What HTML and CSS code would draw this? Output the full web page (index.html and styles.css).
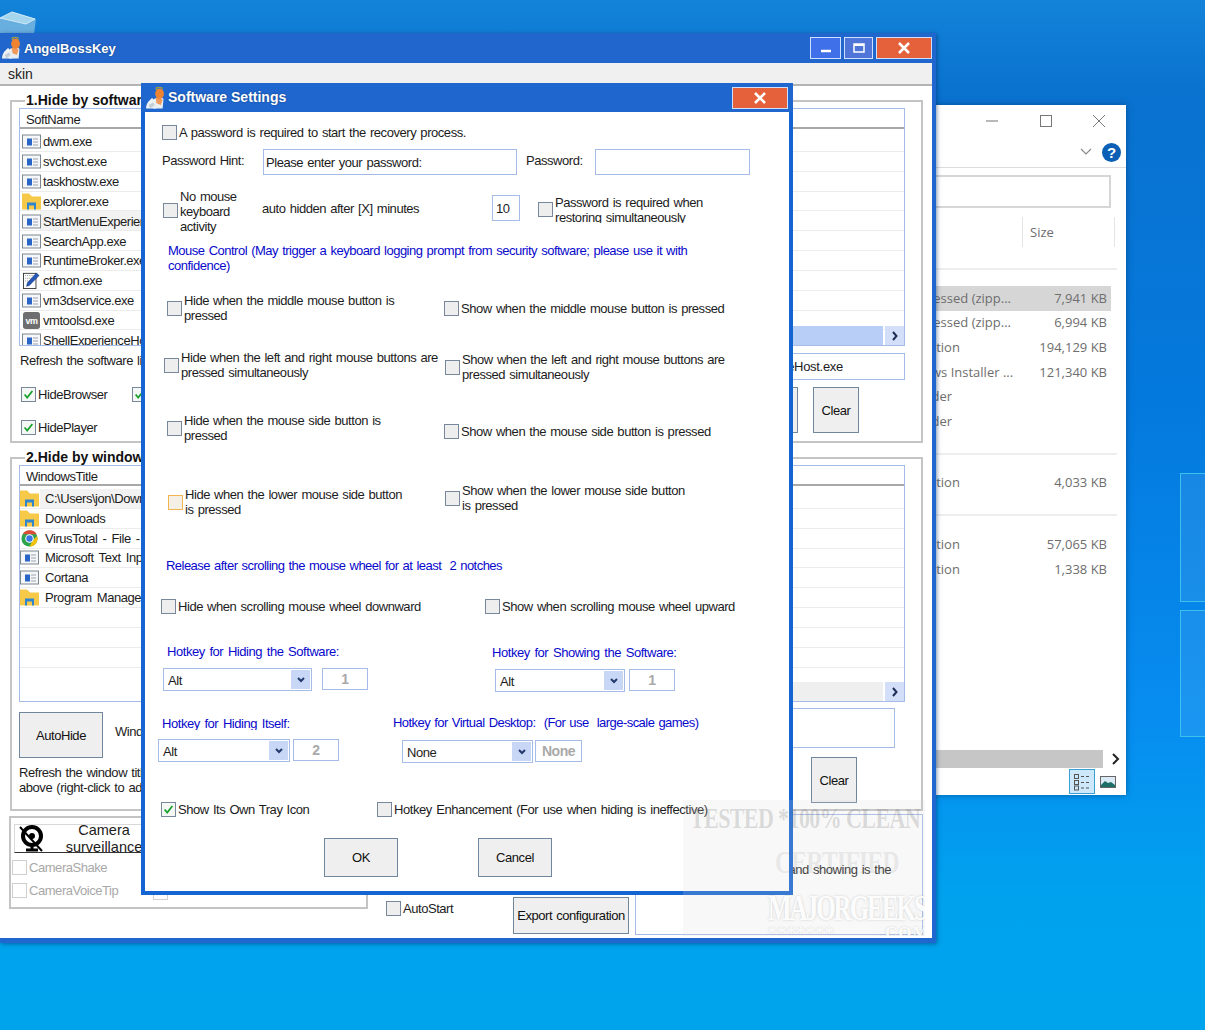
FILE: index.html
```html
<!DOCTYPE html>
<html lang="en">
  <head>
    <meta charset="UTF-8" />
    <title>AngelBossKey</title>
    <link rel="stylesheet" href="styles.css">
  </head>
  <body>
    <svg class="sprite" aria-hidden="true">
      <symbol id="ico-angel" viewBox="0 0 24 26">
        <ellipse cx="15" cy="2.2" rx="3.6" ry="1.4" fill="none" stroke="#a3a53a" stroke-width="1.2"/>
        <path d="M0 25c0-5 3-9 7-12l4 4 1 8z" fill="#eef2f5"/>
        <path d="M9 14l7-3 4 3-1 11H8z" fill="#e9eef2"/>
        <path d="M11 13l5-1 3 3-2 6-5-2z" fill="#f0995a"/>
        <ellipse cx="15.5" cy="8" rx="5" ry="5.8" fill="#ee8432"/>
        <path d="M3 21l5-3 2 3-5 4z" fill="#c3ced7"/>
      </symbol>
      <symbol id="ico-app" viewBox="0 0 19 14">
        <rect x=".5" y=".5" width="18" height="13" fill="#f4f6f8" stroke="#7d8790"/>
        <rect x="5" y="4" width="5" height="7" fill="#2a66c8"/>
        <path d="M11 4.5h5M11 7.5h5M11 10.5h5" stroke="#9aa4ae"/>
      </symbol>
      <symbol id="ico-folder" viewBox="0 0 19 16">
        <path d="M0 0h7l3 3h9v13H0z" fill="#f7c948"/>
        <path d="M5 16V9h9v7h-2v-4H7v4z" fill="#2f86cf"/>
      </symbol>
      <symbol id="ico-chrome" viewBox="0 0 20 20">
        <circle cx="10" cy="10" r="9.5" fill="#2ea44f"/>
        <path d="M2 5a9.5 9.5 0 0 1 16.5 0H10z" fill="#dd4b39"/>
        <path d="M19 7a9.5 9.5 0 0 1-9 12.5L14 12z" fill="#f4c20d"/>
        <circle cx="10" cy="10" r="5" fill="#fff"/>
        <circle cx="10" cy="10" r="3.8" fill="#3b78e7"/>
      </symbol>
      <symbol id="ico-vm" viewBox="0 0 19 19">
        <rect width="19" height="19" rx="3" fill="#6e6e70"/>
        <text x="9.5" y="13" text-anchor="middle" font-family="Liberation Sans" font-size="10" font-weight="700" fill="#fff">vm</text>
      </symbol>
      <symbol id="ico-pen" viewBox="0 0 19 19">
        <rect x=".5" y="1.5" width="14" height="17" fill="#fff" stroke="#333"/>
        <path d="M2.5 4h10M2.5 7h8M2.5 10h6" stroke="#888" stroke-dasharray="1 1"/>
        <path d="M4 16l1-4L15 1l3 3L7 15z" fill="#2457b8" stroke="#0d2d6d" stroke-width=".6"/>
      </symbol>
      <symbol id="ico-tick" viewBox="0 0 15 15">
        <path d="M3 7.5l3 3.5 6-7.5" fill="none" stroke="#16a02c" stroke-width="2"/>
      </symbol>
      <symbol id="ico-chev" viewBox="0 0 10 8">
        <path d="M2 2l3 3 3-3" fill="none" stroke="#22396b" stroke-width="2"/>
      </symbol>
      <symbol id="ico-right" viewBox="0 0 8 10">
        <path d="M2 1l3.5 4L2 9" fill="none" stroke="#1d2d55" stroke-width="2"/>
      </symbol>
    </svg>

    <svg class="recycle" viewBox="0 0 36 24">
      <path d="M0 8L12 2l24 7-2 15H0z" fill="#68aede"/>
      <path d="M0 8L12 2l23 7-9 5z" fill="#a6d5ee"/>
      <path d="M0 8l26 6 9-5M0 8L12 2l23 7" fill="none" stroke="#cfe9f6" stroke-width="1"/>
    </svg>
    <div class="logo-pane logo-top"></div>
    <div class="logo-pane logo-bottom"></div>

    <section class="explorer">
      <div class="ex-caption">
        <span class="ex-btn"><svg width="14" height="14"><path d="M1 7h12" stroke="#888" stroke-width="1.2"/></svg></span>
        <span class="ex-btn"><svg width="14" height="14"><rect x="1.5" y="1.5" width="11" height="11" fill="none" stroke="#777"/></svg></span>
        <span class="ex-btn"><svg width="14" height="14"><path d="M1 1l12 12M13 1L1 13" stroke="#777"/></svg></span>
      </div>
      <div class="ex-ribbon">
        <svg width="14" height="10"><path d="M2 2l5 5 5-5" fill="none" stroke="#8a8a8a" stroke-width="1.2"/></svg>
        <span class="ex-help">?</span>
      </div>
      <div class="ex-search"></div>
      <div class="ex-header"><span>Size</span></div>
      <div class="ex-line ex-line-first"></div>
      <div class="ex-row ex-selected"><span>Compressed (zipp...</span><span>7,941 KB</span></div>
      <div class="ex-row"><span>Compressed (zipp...</span><span>6,994 KB</span></div>
      <div class="ex-row"><span>Application</span><span>194,129 KB</span></div>
      <div class="ex-row"><span>Windows Installer ...</span><span>121,340 KB</span></div>
      <div class="ex-row"><span>File folder</span></div>
      <div class="ex-row"><span>File folder</span></div>
      <div class="ex-line ex-line-mid"></div>
      <div class="ex-row ex-after"><span>Application</span><span>4,033 KB</span></div>
      <div class="ex-line ex-line-mid"></div>
      <div class="ex-row ex-after"><span>Application</span><span>57,065 KB</span></div>
      <div class="ex-row"><span>Application</span><span>1,338 KB</span></div>
      <div class="ex-scroll">
        <div class="ex-thumb"></div>
        <svg width="21" height="18"><path d="M8 4l5 5-5 5" fill="none" stroke="#222" stroke-width="2"/></svg>
      </div>
      <div class="ex-status">
        <span class="ex-view ex-view-on">
          <svg width="18" height="18"><g fill="none" stroke="#555"><rect x="1.5" y="1.5" width="4" height="4"/><rect x="1.5" y="7.5" width="4" height="4"/><rect x="1.5" y="13" width="4" height="4"/><path d="M8 3.5h3M13 3.5h3M8 9.5h3M13 9.5h3M8 15h3M13 15h3"/></g></svg>
        </span>
        <span class="ex-view">
          <svg width="16" height="12"><rect x=".5" y=".5" width="15" height="11" fill="#dbeaf5" stroke="#666"/><path d="M1 9l4-4 3 2 3-1 4 3v2H1z" fill="#1f6f66"/></svg>
        </span>
      </div>
    </section>

    <section class="main-win">
      <header class="titlebar">
        <svg class="title-icon"><use href="#ico-angel"/></svg>
        <span class="title-text">AngelBossKey</span>
        <span class="cap-btn cap-min"><svg width="14" height="10"><path d="M2 8h10" stroke="#fff" stroke-width="2.5"/></svg></span>
        <span class="cap-btn cap-max"><svg width="14" height="12"><rect x="2" y="2" width="10" height="8" fill="none" stroke="#fff" stroke-width="1.5"/><path d="M2 3h10" stroke="#fff" stroke-width="2"/></svg></span>
        <span class="cap-btn cap-close"><svg width="14" height="12"><path d="M2 1l10 10M12 1L2 11" stroke="#fff" stroke-width="2.6"/></svg></span>
      </header>
      <nav class="menubar">skin</nav>

      <fieldset class="group group-soft">
        <legend>1.Hide by software</legend>
        <div class="list list-soft">
          <div class="list-head">SoftName</div>
          <div class="list-row"><svg class="ico"><use href="#ico-app"/></svg>dwm.exe</div>
          <div class="list-row"><svg class="ico"><use href="#ico-app"/></svg>svchost.exe</div>
          <div class="list-row"><svg class="ico"><use href="#ico-app"/></svg>taskhostw.exe</div>
          <div class="list-row"><svg class="ico"><use href="#ico-folder"/></svg>explorer.exe</div>
          <div class="list-row list-hot"><svg class="ico"><use href="#ico-app"/></svg>StartMenuExperienceHost.exe</div>
          <div class="list-row"><svg class="ico"><use href="#ico-app"/></svg>SearchApp.exe</div>
          <div class="list-row"><svg class="ico"><use href="#ico-app"/></svg>RuntimeBroker.exe</div>
          <div class="list-row"><svg class="ico"><use href="#ico-pen"/></svg>ctfmon.exe</div>
          <div class="list-row"><svg class="ico"><use href="#ico-app"/></svg>vm3dservice.exe</div>
          <div class="list-row"><svg class="ico"><use href="#ico-vm"/></svg>vmtoolsd.exe</div>
          <div class="list-row"><svg class="ico"><use href="#ico-app"/></svg>ShellExperienceHost.exe</div>
          <div class="list-scroll list-scroll-blue">
            <div class="scroll-track"></div>
            <span class="scroll-arrow"><svg width="8" height="10"><use href="#ico-right"/></svg></span>
          </div>
        </div>
        <div class="soft-below">
          <div class="soft-left">
            <p class="refresh-soft">Refresh the software list</p>
            <div class="hide-row hide-row-first">
              <span class="opt"><span class="chk chk-on"><svg><use href="#ico-tick"/></svg></span><span class="tight">HideBrowser</span></span>
              <span class="chk chk-on second-chk"><svg><use href="#ico-tick"/></svg></span>
            </div>
            <div class="hide-row hide-row-next">
              <span class="opt"><span class="chk chk-on"><svg><use href="#ico-tick"/></svg></span><span class="tight">HidePlayer</span></span>
            </div>
          </div>
          <div class="soft-right">
            <div class="textbox soft-input">ShellExperienceHost.exe</div>
            <div class="soft-btns">
              <button class="btn btn-hidden">Add</button>
              <button class="btn btn-clear">Clear</button>
            </div>
          </div>
        </div>
      </fieldset>

      <fieldset class="group group-win">
        <legend>2.Hide by windows title</legend>
        <div class="list list-win">
          <div class="list-head">WindowsTitle</div>
          <div class="list-row list-hot"><svg class="ico"><use href="#ico-folder"/></svg>C:\Users\jon\Downloads</div>
          <div class="list-row"><svg class="ico"><use href="#ico-folder"/></svg>Downloads</div>
          <div class="list-row"><svg class="ico"><use href="#ico-chrome"/></svg>VirusTotal - File - Analysis</div>
          <div class="list-row"><svg class="ico"><use href="#ico-app"/></svg>Microsoft Text Input Application</div>
          <div class="list-row"><svg class="ico"><use href="#ico-app"/></svg>Cortana</div>
          <div class="list-row"><svg class="ico"><use href="#ico-folder"/></svg>Program Manager</div>
          <div class="list-row"></div>
          <div class="list-row"></div>
          <div class="list-row"></div>
          <div class="list-scroll list-scroll-gray">
            <div class="scroll-track"></div>
            <span class="scroll-arrow"><svg width="8" height="10"><use href="#ico-right"/></svg></span>
          </div>
        </div>
        <div class="win-below">
          <div class="win-left">
            <div class="autohide-row">
              <button class="btn btn-autohide">AutoHide</button>
              <span class="wind-label">Windows title</span>
            </div>
            <p class="refresh-win">Refresh the window titles in the list<br>above (right-click to add a title)</p>
          </div>
          <div class="win-right">
            <div class="textbox win-input"></div>
            <button class="btn btn-clear win-clear">Clear</button>
          </div>
        </div>
      </fieldset>

      <div class="bottom-row">
        <div class="camera-group">
          <div class="camera-btn">
            <svg class="camera-ico" width="26" height="28" viewBox="0 0 26 28">
              <circle cx="14" cy="11" r="9" fill="none" stroke="#000" stroke-width="4"/>
              <circle cx="14" cy="11" r="3" fill="#000"/>
              <path d="M8 25h12M14 20v5" stroke="#000" stroke-width="3"/>
              <path d="M2 2l22 24" stroke="#000" stroke-width="2"/>
            </svg>
            <span class="camera-text">Camera<br>surveillance</span>
          </div>
          <div class="opt opt-off opt-shake"><span class="chk chk-off"></span><span class="tight">CameraShake</span></div>
          <div class="opt opt-off opt-voice"><span class="chk chk-off"></span><span class="tight">CameraVoiceTip</span></div>
          <span class="chk chk-off voice-extra"></span>
        </div>
        <div class="opt auto-start"><span class="chk"></span><span class="tight">AutoStart</span></div>
        <button class="btn btn-export">Export configuration</button>
        <div class="textbox notes-box">Note that hiding and showing is the</div>
      </div>
    </section>

    <section class="dialog">
      <header class="dialog-title">
        <svg class="title-icon"><use href="#ico-angel"/></svg>
        <span class="title-text">Software Settings</span>
        <span class="cap-btn cap-close"><svg width="14" height="12"><path d="M2 1l10 10M12 1L2 11" stroke="#fff" stroke-width="2.6"/></svg></span>
      </header>

      <div class="opt row-pw-check"><span class="chk"></span><span>A password is required to start the recovery process.</span></div>

      <div class="row-hint">
        <span class="hint-label">Password Hint:</span>
        <div class="textbox hint-input">Please enter your password:</div>
        <span class="pw-label">Password:</span>
        <div class="textbox pw-input"></div>
      </div>

      <div class="row-idle">
        <span class="chk idle-chk"></span>
        <span class="idle-label">No mouse<br>keyboard<br>activity</span>
        <span class="idle-after">auto hidden after [X] minutes</span>
        <div class="textbox idle-input">10</div>
        <span class="chk idle-pw-chk"></span>
        <span class="idle-pw-label">Password is required when<br>restoring simultaneously</span>
      </div>

      <p class="blue note-mouse">Mouse Control (May trigger a keyboard logging prompt from security software; please use it with<br>confidence)</p>

      <div class="opt-row row-middle">
        <div class="opt"><span class="chk"></span><span>Hide when the middle mouse button is<br>pressed</span></div>
        <div class="opt"><span class="chk"></span><span>Show when the middle mouse button is pressed</span></div>
      </div>
      <div class="opt-row row-both">
        <div class="opt"><span class="chk"></span><span>Hide when the left and right mouse buttons are<br>pressed simultaneously</span></div>
        <div class="opt"><span class="chk"></span><span>Show when the left and right mouse buttons are<br>pressed simultaneously</span></div>
      </div>
      <div class="opt-row row-side">
        <div class="opt"><span class="chk"></span><span>Hide when the mouse side button is<br>pressed</span></div>
        <div class="opt"><span class="chk"></span><span>Show when the mouse side button is pressed</span></div>
      </div>
      <div class="opt-row row-lower">
        <div class="opt"><span class="chk chk-focus"></span><span>Hide when the lower mouse side button<br>is pressed</span></div>
        <div class="opt"><span class="chk"></span><span>Show when the lower mouse side button<br>is pressed</span></div>
      </div>

      <p class="blue note-wheel">Release after scrolling the mouse wheel for at least&nbsp; 2 notches</p>

      <div class="opt-row row-wheel">
        <div class="opt"><span class="chk"></span><span>Hide when scrolling mouse wheel downward</span></div>
        <div class="opt"><span class="chk"></span><span>Show when scrolling mouse wheel upward</span></div>
      </div>

      <div class="row-keys-label">
        <span class="blue key-hide-label">Hotkey for Hiding the Software:</span>
        <span class="blue key-show-label">Hotkey for Showing the Software:</span>
      </div>
      <div class="row-keys">
        <div class="combo combo-hide">Alt<span class="combo-arrow"><svg width="10" height="8"><use href="#ico-chev"/></svg></span></div>
        <div class="keybox key-hide-box">1</div>
        <div class="combo combo-show">Alt<span class="combo-arrow"><svg width="10" height="8"><use href="#ico-chev"/></svg></span></div>
        <div class="keybox key-show-box">1</div>
      </div>

      <div class="row-keys-label row-self-label">
        <span class="blue key-self-label">Hotkey for Hiding Itself:</span>
        <span class="blue key-virt-label">Hotkey for Virtual Desktop:&nbsp; (For use&nbsp; large-scale games)</span>
      </div>
      <div class="row-keys row-keys-self">
        <div class="combo combo-self">Alt<span class="combo-arrow"><svg width="10" height="8"><use href="#ico-chev"/></svg></span></div>
        <div class="keybox key-self-box">2</div>
        <div class="combo combo-virt">None<span class="combo-arrow"><svg width="10" height="8"><use href="#ico-chev"/></svg></span></div>
        <div class="keybox key-virt-box">None</div>
      </div>

      <div class="row-tray">
        <div class="opt tray-own"><span class="chk chk-on"><svg><use href="#ico-tick"/></svg></span><span>Show Its Own Tray Icon</span></div>
        <div class="opt tray-enh"><span class="chk"></span><span>Hotkey Enhancement (For use when hiding is ineffective)</span></div>
      </div>

      <div class="row-actions">
        <button class="btn btn-action">OK</button>
        <button class="btn btn-action">Cancel</button>
      </div>
    </section>

    <aside class="stamp">
      <div class="stamp-top">TESTED *100% CLEAN</div>
      <div class="stamp-mid">CERTIFIED</div>
      <div class="stamp-name">MAJORGEEKS</div>
      <div class="stamp-foot">******* .COM</div>
    </aside>
  </body>
</html>
```

FILE: styles.css
```css
* {
  box-sizing: border-box;
}
html,
body {
  height: 1030px;
}
body {
  margin: 0;
  position: relative;
  overflow: hidden;
  font-family: "Liberation Sans", Arial, sans-serif;
  font-size: 13px;
  letter-spacing: -0.45px;
  word-spacing: 1px;
  line-height: 15px;
  color: #1c1c1c;
  background: linear-gradient(180deg, #1383d9 0, #0a72cf 90px, #0479dd 400px, #078df0 720px, #00a2ee 900px, #00a4ec 1030px);
}
p {
  margin: 0;
}
.sprite {
  position: absolute;
  width: 0;
  height: 0;
}

/* desktop */
.recycle {
  position: absolute;
  left: 0;
  top: 10px;
  width: 36px;
  height: 24px;
}
.logo-pane {
  position: absolute;
  left: 1180px;
  width: 40px;
  background: rgba(255, 255, 255, 0.08);
  border: 1px solid #3dc0ee;
}
.logo-top {
  top: 473px;
  height: 129px;
}
.logo-bottom {
  top: 610px;
  height: 127px;
}

/* explorer behind */
.explorer {
  position: absolute;
  left: 700px;
  top: 105px;
  width: 426px;
  height: 690px;
  background: #fff;
  display: flex;
  flex-direction: column;
  box-shadow: 0 0 6px rgba(0, 40, 90, 0.5);
  font-family: "Open Sans", sans-serif;
  font-size: 13px;
  letter-spacing: 0;
  word-spacing: 0;
  color: #6e6e6e;
}
.ex-caption {
  display: flex;
  justify-content: flex-end;
  height: 32px;
}
.ex-btn {
  width: 53.5px;
  display: flex;
  align-items: center;
  justify-content: center;
}
.ex-ribbon {
  height: 31px;
  display: flex;
  justify-content: flex-end;
  align-items: center;
  gap: 9px;
  padding-right: 5px;
  border-bottom: 1px solid #dcdcdc;
}
.ex-help {
  width: 19px;
  height: 19px;
  border-radius: 50%;
  background: #0b5fb5;
  color: #fff;
  font: bold 15px/19px "Liberation Sans", sans-serif;
  text-align: center;
}
.ex-search {
  margin: 7px 15px 0 0;
  height: 33px;
  border: 2px solid #d6d6d6;
  border-left: none;
}
.ex-header {
  display: flex;
  justify-content: flex-end;
  margin: 9px 11px 0 0;
}
.ex-header span {
  width: 93px;
  height: 30px;
  padding-left: 7px;
  line-height: 30px;
  border-left: 1px solid #e5e5e5;
  border-right: 1px solid #e5e5e5;
}
.ex-line {
  height: 2px;
  background: #eeeeee;
  margin-right: 9px;
}
.ex-line-first {
  margin-top: 21px;
  margin-bottom: 16px;
}
.ex-line-mid {
  margin-top: 19px;
}
.ex-row {
  height: 24.6px;
  display: flex;
  justify-content: space-between;
  align-items: center;
  padding: 0 4px 0 192px;
  margin-right: 15px;
}
.ex-selected {
  background: #d6d6d6;
}
.ex-after {
  margin-top: 16px;
}
.ex-scroll {
  margin-top: auto;
  height: 18px;
  display: flex;
}
.ex-thumb {
  flex: 1;
  background: #c6c6c6;
  margin-right: 2px;
}
.ex-status {
  height: 27px;
  display: flex;
  justify-content: flex-end;
  align-items: center;
  padding-right: 10px;
  gap: 4px;
}
.ex-view {
  width: 17px;
  height: 25px;
  display: flex;
  align-items: center;
  justify-content: center;
}
.ex-view-on {
  width: 26px;
  background: #cde8fb;
  border: 1px solid #3b9fd6;
}

/* main window */
.main-win {
  position: absolute;
  left: 0;
  top: 33px;
  width: 936px;
  height: 910px;
  background: #fff;
  border-right: 4px solid #1f66cf;
  border-bottom: 5px solid #1f66cf;
  box-shadow: 1px 1px 4px rgba(0, 40, 90, 0.5);
}
.titlebar {
  height: 30px;
  background: #2166cd;
  display: flex;
  align-items: center;
  padding-left: 2px;
}
.title-icon {
  width: 21px;
  height: 24px;
  flex: none;
}
.title-text {
  flex: 1;
  margin-left: 1px;
  color: #fff;
  font-size: 13px;
  font-weight: bold;
  letter-spacing: 0;
  word-spacing: 0;
  text-shadow: 0 0 2px rgba(0, 0, 0, 0.4);
}
.cap-btn {
  height: 22px;
  display: flex;
  align-items: center;
  justify-content: center;
  border: 1px solid #cfe0ff;
}
.cap-min {
  width: 31px;
  background: #3f70ea;
}
.cap-max {
  width: 29px;
  margin-left: 3px;
  background: #4f75d9;
}
.cap-close {
  width: 56px;
  margin-left: 3px;
  background: #e5613b;
}
.menubar {
  height: 23px;
  padding: 4px 8px;
  background: #f0f0f0;
  border-bottom: 2px solid #b4b4b4;
  font-size: 14px;
  letter-spacing: 0;
}
.group {
  margin: 7px 0 0 10px;
  padding: 0 16px 0 7px;
  width: 913px;
  border: 2px solid #c4c4c4;
  min-inline-size: 0;
}
.group legend {
  margin-left: 6px;
  padding: 0 1px;
  height: 15px;
  font-size: 14px;
  font-weight: bold;
  letter-spacing: 0;
  word-spacing: 0;
  color: #111;
}
.group-soft {
  height: 350px;
}
.group-win {
  height: 361px;
}
.list {
  position: relative;
  width: 886px;
  border: 1px solid #a5bbe8;
  overflow: hidden;
}
.list-soft {
  height: 238px;
}
.list-win {
  height: 237px;
}
.list-head {
  height: 20px;
  padding: 3px 6px 0;
  border-bottom: 2px solid #a8a8a8;
  margin-bottom: 3px;
}
.list-row {
  height: 19.85px;
  display: flex;
  align-items: center;
  padding-left: 2px;
  padding-top: 1px;
  border-bottom: 1px solid #ececec;
  white-space: nowrap;
}
.list-hot {
  background: linear-gradient(90deg, #fff 20px, #f2f2f2 20px, #f2f2f2 300px, #fff 300px);
}
.list-win .list-row {
  padding-top: 0;
  word-spacing: 2px;
}
.ico {
  width: 19px;
  height: 17px;
  margin-right: 2px;
  flex: none;
}
.list-win .ico {
  margin: 0 6px 0 -2px;
}
.list-scroll {
  position: absolute;
  left: 122px;
  right: 0;
  bottom: 0;
  height: 19px;
  display: flex;
}
.scroll-track {
  flex: 1;
  margin-right: 2px;
}
.list-scroll-blue .scroll-track {
  background: #b9cef6;
}
.list-scroll-gray .scroll-track {
  background: #efefef;
}
.scroll-arrow {
  width: 19px;
  display: flex;
  align-items: center;
  justify-content: center;
  background: #d3dff8;
}
.soft-below,
.win-below {
  display: flex;
  justify-content: space-between;
}
.soft-left {
  padding-left: 2px;
}
.refresh-soft {
  margin: 7px 0 0 -1px;
}
.hide-row {
  display: flex;
}
.hide-row-first {
  margin-top: 19px;
}
.hide-row-next {
  margin-top: 18px;
}
.second-chk {
  margin-left: 25px;
}
.soft-right {
  width: 265px;
}
.textbox {
  border: 1px solid #a5bbe8;
  background: #fff;
  padding: 4px 2px;
  white-space: nowrap;
  overflow: hidden;
}
.soft-input {
  height: 27px;
  margin-top: 7px;
  padding: 5px 61px 0 0;
  text-align: right;
  letter-spacing: -0.3px;
}
.soft-btns {
  display: flex;
  justify-content: flex-end;
  margin: 7px 46px 0 0;
  gap: 15px;
}
.btn {
  font: inherit;
  letter-spacing: inherit;
  word-spacing: inherit;
  white-space: nowrap;
  color: #111;
  background: #efefef;
  border: 1px solid #70869c;
  padding: 0;
}
.btn-hidden {
  width: 78px;
  height: 46px;
}
.btn-clear {
  width: 46px;
  height: 46px;
}
.autohide-row {
  display: flex;
  margin-top: 10px;
}
.btn-autohide {
  width: 84px;
  height: 46px;
}
.wind-label {
  margin: 12px 0 0 12px;
}
.refresh-win {
  margin-top: 7px;
}
.win-right {
  width: 255px;
  margin-right: 10px;
  display: flex;
  flex-direction: column;
  align-items: flex-end;
}
.win-input {
  width: 255px;
  height: 40px;
  margin-top: 6px;
}
.win-clear {
  margin: 9px 38px 0 0;
}
.bottom-row {
  display: flex;
  margin-top: 3px;
}
.camera-group {
  position: relative;
  width: 359px;
  height: 93px;
  margin: 2px 0 0 9px;
  padding: 6px 0 0 3px;
  border: 2px solid #c4c4c4;
}
.camera-btn {
  width: 150px;
  height: 29px;
  display: flex;
  border-top: 1px solid #d8d8d8;
  border-left: 1px solid #d8d8d8;
  border-bottom: 1px solid #333;
  overflow: hidden;
}
.camera-ico {
  flex: none;
  margin: 0 0 0 3px;
}
.camera-text {
  width: 92px;
  margin: -3px 0 0 14px;
  text-align: center;
  font-size: 14.5px;
  line-height: 17px;
  letter-spacing: 0;
}
.opt {
  display: flex;
  align-items: center;
  gap: 2px;
  white-space: nowrap;
}
.opt-off {
  color: #a8a8a8;
  margin-left: -2px;
}
.opt-shake {
  margin-top: 7px;
}
.opt-voice {
  margin-top: 8px;
}
.voice-extra {
  position: absolute;
  left: 142px;
  top: 67px;
}
.tight {
  word-spacing: 0;
}
.chk {
  width: 15px;
  height: 15px;
  flex: none;
  display: block;
  background: #eeeeee;
  border: 1px solid #78889a;
}
.chk svg {
  display: block;
  width: 13px;
  height: 13px;
}
.chk-on {
  background: #f4f7f4;
}
.chk-off {
  background: #fff;
  border-color: #cfcfcf;
}
.chk-focus {
  background: #f4f0e6;
  border-color: #f2b551;
}
.auto-start {
  width: 127px;
  height: 15px;
  margin: 87px 0 0 18px;
  flex: none;
}
.btn-export {
  width: 116px;
  height: 37px;
  margin-top: 83px;
  flex: none;
}
.notes-box {
  width: 288px;
  height: 121px;
  margin-left: 6px;
  padding: 47px 31px 0 0;
  text-align: right;
}

/* settings dialog */
.dialog {
  position: absolute;
  left: 141px;
  top: 83px;
  width: 652px;
  height: 812px;
  background: #fff;
  border: 4px solid #1464d2;
  border-top: none;
}
.dialog-title {
  height: 29px;
  background: #1f66cf;
  margin: 0 -4px;
  display: flex;
  align-items: center;
  padding: 0 5px;
}
.dialog-title .title-text {
  font-size: 14px;
}
.dialog-title .cap-close {
  margin-top: 1px;
}
.blue {
  color: #0808cc;
}
.row-pw-check {
  margin: 12px 0 0 17px;
  height: 16px;
}
.row-hint {
  display: flex;
  align-items: center;
  margin: 9px 0 0 17px;
  height: 26px;
}
.hint-label {
  width: 101px;
  margin-top: -3px;
}
.hint-input {
  width: 254px;
  height: 26px;
  padding-top: 5px;
}
.pw-label {
  width: 69px;
  margin: -3px 0 0 9px;
}
.pw-input {
  width: 155px;
  height: 26px;
}
.row-idle {
  display: flex;
  align-items: flex-start;
  margin: 14px 0 0 18px;
  height: 46px;
}
.idle-chk {
  margin-top: 14px;
}
.idle-label {
  width: 82px;
  margin-left: 2px;
}
.idle-after {
  width: 230px;
  margin-top: 12px;
}
.idle-input {
  width: 28px;
  height: 26px;
  margin-top: 6px;
  padding-top: 5px;
  padding-left: 3px;
}
.idle-pw-chk {
  margin: 13px 0 0 18px;
}
.idle-pw-label {
  height: 28px;
  margin: 6px 0 0 2px;
  overflow: hidden;
}
.note-mouse {
  margin: 8px 0 0 23px;
  letter-spacing: -0.5px;
}
.opt-row {
  display: grid;
  grid-template-columns: 297px 1fr;
  align-items: start;
}
.row-middle {
  margin-top: 20px;
}
.row-middle .opt:first-child {
  margin-left: 22px;
}
.row-middle .opt:last-child {
  margin: 8px 0 0 2px;
}
.row-both {
  margin-top: 27px;
}
.row-both .opt:first-child {
  margin-left: 19px;
}
.row-both .opt:last-child {
  margin: 2px 0 0 3px;
}
.row-side {
  margin-top: 31px;
}
.row-side .opt:first-child {
  margin-left: 22px;
}
.row-side .opt:last-child {
  margin: 11px 0 0 2px;
}
.row-lower {
  margin-top: 40px;
}
.row-lower .opt:first-child {
  margin: 4px 0 0 23px;
}
.row-lower .opt:last-child {
  margin-left: 3px;
}
.note-wheel {
  margin: 41px 0 0 21px;
  letter-spacing: -0.53px;
}
.row-wheel {
  margin-top: 26px;
}
.row-wheel .opt:first-child {
  margin-left: 16px;
}
.row-wheel .opt:last-child {
  margin-left: 43px;
}
.row-keys-label {
  display: flex;
  margin-top: 30px;
  height: 16px;
}
.key-hide-label {
  margin-left: 22px;
  width: 325px;
  word-spacing: 1.5px;
}
.key-show-label {
  margin-top: 1px;
  word-spacing: 1.5px;
}
.row-self-label {
  margin-top: 23px;
  height: 15px;
}
.key-self-label {
  margin: 1px 0 0 17px;
  width: 231px;
  height: 14px;
  overflow: hidden;
  word-spacing: 1.5px;
}
.key-virt-label {
  letter-spacing: -0.55px;
}
.row-keys {
  display: flex;
  align-items: flex-start;
  margin-top: 8px;
}
.row-keys-self {
  margin-top: 9px;
}
.combo {
  position: relative;
  height: 23px;
  padding: 4px;
  border: 1px solid #a5bbe8;
}
.combo-arrow {
  position: absolute;
  right: 1px;
  top: 1px;
  bottom: 1px;
  width: 19px;
  display: flex;
  align-items: center;
  justify-content: center;
  background: #c9d7f6;
}
.keybox {
  width: 46px;
  height: 22px;
  border: 1px solid #a5bbe8;
  text-align: center;
  color: #a9a9a9;
  font-weight: bold;
  font-size: 14px;
  line-height: 20px;
}
.combo-hide {
  width: 149px;
  margin-left: 18px;
}
.key-hide-box {
  margin-left: 10px;
}
.combo-show {
  width: 130px;
  margin: 1px 0 0 127px;
}
.key-show-box {
  margin: 1px 0 0 4px;
}
.combo-self {
  width: 132px;
  margin-left: 13px;
}
.key-self-box {
  margin-left: 3px;
}
.combo-virt {
  width: 131px;
  margin: 1px 0 0 63px;
}
.key-virt-box {
  width: 47px;
  margin: 1px 0 0 2px;
}
.row-tray {
  display: flex;
  margin-top: 38px;
  height: 16px;
}
.tray-own {
  margin-left: 16px;
  width: 216px;
}
.tray-enh {
  word-spacing: 1.4px;
}
.row-actions {
  display: flex;
  margin: 21px 0 0 179px;
  gap: 80px;
}
.btn-action {
  width: 74px;
  height: 39px;
}

/* watermark */
.stamp {
  position: absolute;
  left: 683px;
  top: 800px;
  width: 242px;
  height: 136px;
  overflow: hidden;
  background: rgba(215, 215, 215, 0.18);
  font-family: "Liberation Serif", serif;
  font-weight: bold;
  letter-spacing: 0;
  word-spacing: 0;
  white-space: nowrap;
}
.stamp-top {
  margin: 7px 0 0 7px;
  font-size: 22px;
  line-height: 24px;
  letter-spacing: -0.6px;
  color: rgba(110, 110, 110, 0.22);
  transform: scaleY(1.3);
}
.stamp-mid {
  margin: 19px 0 0 92px;
  font-size: 24px;
  line-height: 26px;
  letter-spacing: -1px;
  color: rgba(120, 120, 120, 0.14);
  transform: scaleY(1.3);
}
.stamp-name {
  margin: 20px 0 0 85px;
  font-size: 25px;
  line-height: 26px;
  letter-spacing: -2px;
  color: rgba(255, 255, 255, 0.95);
  text-shadow: 0 0 2px rgba(120, 120, 120, 0.35);
  transform: scaleY(1.4);
}
.stamp-foot {
  margin: 2px 0 0 85px;
  font-size: 17px;
  line-height: 18px;
  letter-spacing: 1px;
  word-spacing: 40px;
  color: rgba(255, 255, 255, 0.95);
  text-shadow: 0 0 2px rgba(120, 120, 120, 0.35);
}
```
